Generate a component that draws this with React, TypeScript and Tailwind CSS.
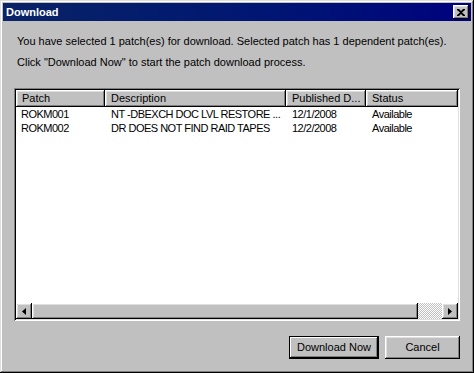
const raised =
  "shadow-[inset_-1px_-1px_#000,inset_1px_1px_#fff,inset_-2px_-2px_#808080,inset_2px_2px_#dfdfdf]";

const columns = [
  { label: "Patch", width: "w-[89px]" },
  { label: "Description", width: "w-[181px]" },
  { label: "Published D...", width: "w-[80px]" },
  { label: "Status", width: "flex-1" },
];

const patches = [
  ["ROKM001", "NT -DBEXCH DOC LVL RESTORE ...", "12/1/2008", "Available"],
  ["ROKM002", "DR DOES NOT FIND RAID TAPES", "12/2/2008", "Available"],
];

const ArrowButton = ({ dir }: { dir: "left" | "right" }) => (
  <div className={`w-4 h-4 bg-[#c0c0c0] flex items-center justify-center ${raised}`}>
    <svg width="4" height="7" viewBox="0 0 4 7">
      {dir === "left" ? <path d="M4 0 L0 3.5 L4 7 Z" fill="#000" /> : <path d="M0 0 L4 3.5 L0 7 Z" fill="#000" />}
    </svg>
  </div>
);

export default function App() {
  return (
    <div
      className="w-[474px] h-[373px] bg-[#c0c0c0] p-[3px] flex flex-col text-[11px] text-black shadow-[inset_-1px_-1px_#000,inset_1px_1px_#dfdfdf,inset_-2px_-2px_#808080,inset_2px_2px_#fff]"
      style={{ fontFamily: '"Liberation Sans", Arial, sans-serif' }}
    >
      {/* title bar */}
      <div className="h-[18px] flex items-center justify-between pl-[3px] pr-[2px] bg-gradient-to-r from-[#0a2266] to-[#00007e]">
        <span className="text-white font-bold text-[11px] leading-none">Download</span>
        <button className={`w-4 h-[14px] bg-[#c0c0c0] flex items-center justify-center ${raised}`}>
          <svg width="8" height="7" viewBox="0 0 8 7">
            <path d="M0 0h2l2 2 2-2h2v1L5 3.5 8 6v1H6L4 5 2 7H0V6l3-2.5L0 1z" fill="#000" />
          </svg>
        </button>
      </div>

      <div className="pl-[14px] pt-[14px] leading-[13px] whitespace-nowrap">
        <p>You have selected 1 patch(es) for download. Selected patch has 1 dependent patch(es).</p>
        <p className="mt-[8px]">Click "Download Now" to start the patch download process.</p>
      </div>

      {/* list view */}
      <div className="ml-[11px] mt-[19px] w-[446px] h-[233px] flex flex-col p-[2px] bg-white shadow-[inset_1px_1px_#808080,inset_-1px_-1px_#fff,inset_2px_2px_#000,inset_-2px_-2px_#dfdfdf]">
        <div className="flex h-[17px] shrink-0">
          {columns.map((c) => (
            <div key={c.label} className={`${c.width} bg-[#c0c0c0] pl-[6px] flex items-center whitespace-nowrap overflow-hidden ${raised}`}>
              {c.label}
            </div>
          ))}
        </div>
        <div className="flex-1 tracking-[-0.5px]">
          {patches.map((row) => (
            <div key={row[0]} className="flex h-[14px] items-center whitespace-nowrap">
              <div className="w-[89px] pl-[5px] overflow-hidden">{row[0]}</div>
              <div className="w-[181px] pl-[6px] overflow-hidden">{row[1]}</div>
              <div className="w-[80px] pl-[6px] overflow-hidden">{row[2]}</div>
              <div className="flex-1 pl-[6px] overflow-hidden">{row[3]}</div>
            </div>
          ))}
        </div>
        <div className="flex h-4 shrink-0">
          <ArrowButton dir="left" />
          <div className={`w-[386px] bg-[#c0c0c0] ${raised}`} />
          <div className="flex-1 bg-[conic-gradient(#fff_25%,#c0c0c0_0_50%,#fff_0_75%,#c0c0c0_0)] bg-[length:2px_2px]" />
          <ArrowButton dir="right" />
        </div>
      </div>

      <div className="flex justify-end gap-[6px] mt-[15px] pr-[11px]">
        <button className="w-[90px] h-[23px] bg-[#c0c0c0] border border-black shadow-[inset_-1px_-1px_#000,inset_1px_1px_#fff,inset_-2px_-2px_#808080]">
          Download Now
        </button>
        <button className={`w-[75px] h-[23px] bg-[#c0c0c0] ${raised}`}>Cancel</button>
      </div>
    </div>
  );
}
